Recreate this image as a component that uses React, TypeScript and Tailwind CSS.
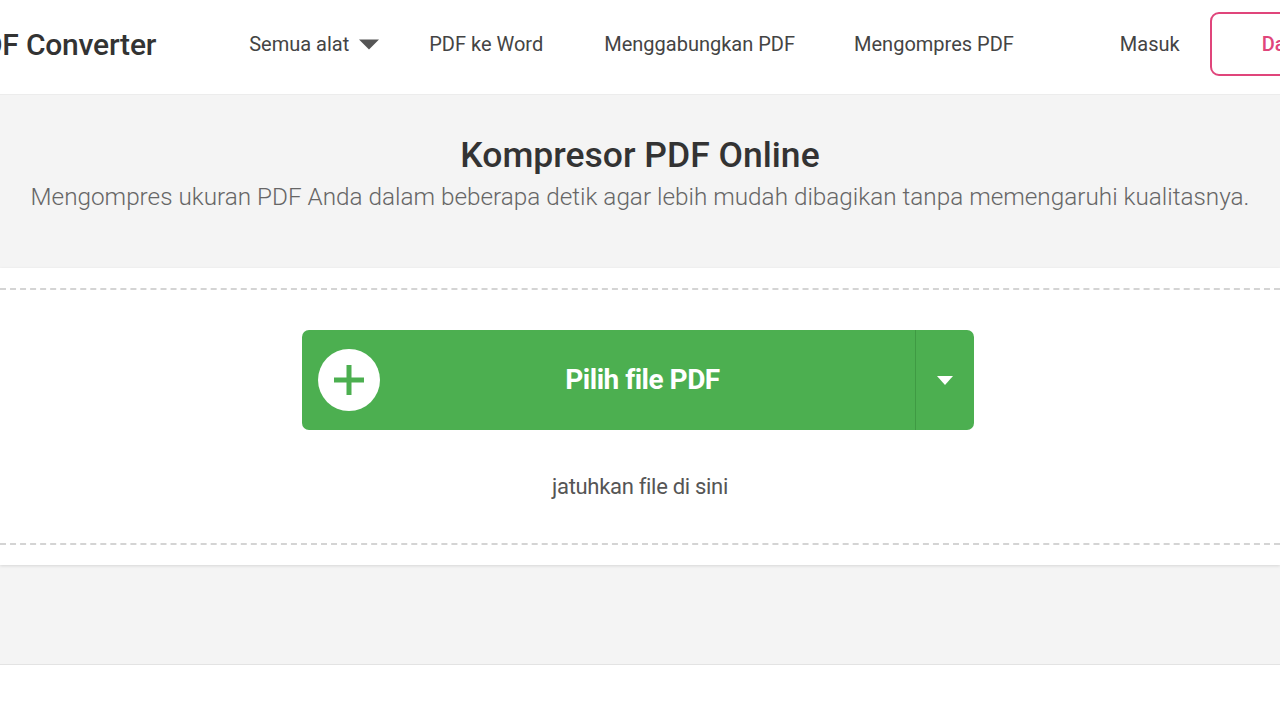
import React from "react";

export default function App() {
  return (
    <div className="w-[1280px] h-[720px] overflow-hidden bg-white font-['Roboto',sans-serif]">
      <header className="h-[95px] border-b border-[#ececec] flex items-center pb-[6px] bg-white whitespace-nowrap">
        <div className="ml-[-36px] shrink-0 text-[30px] font-medium text-[#333] tracking-[-0.2px]">PDF Converter</div>
        <nav className="flex items-center shrink-0 text-[20px] text-[#444] ml-[93px]">
          <div className="flex items-center gap-[10px] shrink-0">
            <span>Semua alat</span>
            <svg width="20" height="11" viewBox="0 0 20 11"><path d="M0 0.5 L20 0.5 L10 10.5 Z" fill="#555" /></svg>
          </div>
          <span className="ml-[50px] shrink-0">PDF ke Word</span>
          <span className="ml-[61px] shrink-0">Menggabungkan PDF</span>
          <span className="ml-[59px] shrink-0">Mengompres PDF</span>
          <span className="ml-[106px] shrink-0">Masuk</span>
          <div className="ml-[30px] h-[64px] w-[130px] shrink-0 border-2 border-[#e0457b] rounded-[9px] flex items-center pl-[50px] text-[#e0457b] font-medium">Daftar</div>
        </nav>
      </header>
      <div className="bg-[#f4f4f4]">
        <div className="h-[173px] flex flex-col items-center pt-[38px]">
          <h1 className="text-[35.5px] font-medium text-[#333] leading-[44px]">Kompresor PDF Online</h1>
          <p className="text-[24.3px] text-[#666] font-light leading-[32px] mt-[4px] whitespace-nowrap">Mengompres ukuran PDF Anda dalam beberapa detik agar lebih mudah dibagikan tanpa memengaruhi kualitasnya.</p>
        </div>
        <div className="bg-white h-[297px] pt-[20px] shadow-[0_1px_3px_rgba(0,0,0,0.12)]">
          <div className="border-y-2 border-dashed border-[#d4d4d4] h-[257px] flex flex-col items-center pt-[40px]">
            <div className="w-[672px] h-[100px] ml-[-4px] bg-[#4caf50] rounded-[7px] flex items-stretch text-white">
              <div className="flex-1 flex items-center relative">
                <div className="absolute left-[16px] top-[19px] w-[62px] h-[62px] rounded-full bg-white flex items-center justify-center">
                  <svg width="34" height="34" viewBox="0 0 34 34"><path d="M17 2 V32 M2 17 H32" stroke="#4caf50" strokeWidth="5" /></svg>
                </div>
                <span className="w-full text-center text-[28px] font-bold pl-[68px] tracking-[-0.5px]">Pilih file PDF</span>
              </div>
              <div className="w-[59px] border-l border-[#3f9a43] flex items-center justify-center">
                <svg width="16" height="9" viewBox="0 0 16 9"><path d="M0 0 H16 L8 9 Z" fill="white" /></svg>
              </div>
            </div>
            <p className="mt-[40px] text-[22px] text-[#555] tracking-[-0.3px]">jatuhkan file di sini</p>
          </div>
        </div>
        <div className="h-[100px] border-b border-[#e3e3e3]"></div>
      </div>
    </div>
  );
}
